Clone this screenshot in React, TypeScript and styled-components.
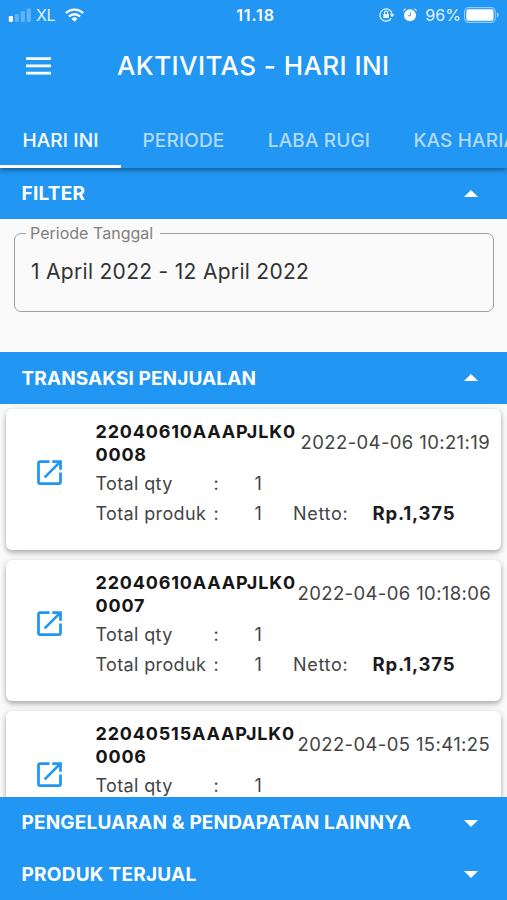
import React from "react";
import styled, { createGlobalStyle } from "styled-components";

const BLUE = "#2196f3";

const GlobalStyle = createGlobalStyle`
  *, *::before, *::after { box-sizing: border-box; }
  html, body { margin: 0; background: #fafafa; }
  body { font-family: Inter, "Liberation Sans", sans-serif; overflow: hidden; }
`;

const Screen = styled.div`
  display: flex;
  flex-direction: column;
  width: 507px;
  height: 900px;
  overflow: hidden;
  background: #fafafa;
`;

const Header = styled.header`
  flex: none;
  position: relative;
  z-index: 2;
  height: 168px;
  background: ${BLUE};
  color: #fff;
  box-shadow: 0 2px 5px rgba(0, 0, 0, 0.4);
`;

const StatusBar = styled.div`
  display: grid;
  grid-template-columns: 1fr auto 1fr;
  align-items: center;
  height: 30px;
  padding: 0 7px 0 8px;
`;

const StatusGroup = styled.div<{ $end?: boolean }>`
  display: flex;
  align-items: center;
  justify-content: ${(p) => (p.$end ? "flex-end" : "flex-start")};
  height: 30px;
`;

const StatusText = styled.span<{ $spacing?: number }>`
  font-size: 16px;
  line-height: 20px;
  letter-spacing: ${(p) => p.$spacing ?? 0}px;
  color: rgba(255, 255, 255, 0.9);
`;

const Clock = styled.span`
  font-size: 16px;
  font-weight: 600;
  line-height: 20px;
  letter-spacing: 0.9px;
  padding-left: 3px;
`;

const SignalIcon = styled.svg`
  margin-right: 5px;
`;
const WifiSvg = styled.svg`
  margin: 0 0 1px 10px;
`;
const LockSvg = styled.svg`
  margin-right: 8px;
`;
const AlarmSvg = styled.svg`
  margin-right: 8px;
`;
const BatterySvg = styled.svg`
  margin-left: 3px;
`;

const TitleBar = styled.div`
  display: flex;
  align-items: center;
  height: 72px;
  padding-left: 26px;
`;

const MenuButton = styled.button`
  display: flex;
  width: 25px;
  height: 18px;
  margin: 0 66px 0 0;
  padding: 0;
  border: 0;
  background: none;
`;

const Title = styled.h1`
  margin: 0;
  font-size: 26px;
  font-weight: 500;
  line-height: 32px;
  letter-spacing: 0.42px;
  white-space: nowrap;
`;

const Tabs = styled.nav`
  display: flex;
  height: 66px;
  overflow: hidden;
`;

const Tab = styled.a<{ $active?: boolean; $width: number }>`
  flex: none;
  display: flex;
  justify-content: center;
  width: ${(p) => p.$width}px;
  padding-top: 27px;
  border-bottom: 3px solid ${(p) => (p.$active ? "#fff" : "transparent")};
  font-size: 19px;
  font-weight: 500;
  line-height: 24px;
  letter-spacing: 0.15px;
  white-space: nowrap;
  color: ${(p) => (p.$active ? "#fff" : "rgba(255, 255, 255, 0.66)")};
`;

const SectionBar = styled.div<{ $height: number }>`
  flex: none;
  display: flex;
  align-items: center;
  justify-content: space-between;
  height: ${(p) => p.$height}px;
  padding: 0 29.5px 0 21px;
  background: ${BLUE};
  color: #fff;
`;

const SectionTitle = styled.h2<{ $spacing: number }>`
  margin: 0;
  padding: 1px 0 0 0.5px;
  font-size: 19px;
  font-weight: 700;
  line-height: 24px;
  letter-spacing: ${(p) => p.$spacing}px;
  white-space: nowrap;
`;

const FilterPanel = styled.section`
  flex: none;
  height: 133px;
  padding: 5px 13px 0 14px;
`;

const Field = styled.fieldset`
  height: 88px;
  margin: 0;
  padding: 16px 15px 0 11px;
  border: 1.5px solid #a0a0a0;
  border-radius: 7px;
`;

const FieldLabel = styled.legend`
  height: 19px;
  padding: 0 7px 0 4px;
  font-size: 16px;
  line-height: 19px;
  letter-spacing: 0.02px;
  color: #808080;
`;

const FieldValue = styled.div`
  padding-left: 5px;
  font-size: 21px;
  line-height: 26px;
  letter-spacing: 0.3px;
  color: #333;
`;

const CardList = styled.section`
  flex: 1;
  min-height: 0;
  display: flex;
  flex-direction: column;
  gap: 10px;
  padding: 5px 6px 0;
  overflow: hidden;
`;

const Card = styled.article`
  flex: none;
  display: grid;
  grid-template-columns: 89.5px 1fr;
  height: 141px;
  padding-top: 11px;
  border-radius: 6px;
  background: #fff;
  box-shadow: 0 3px 5px rgba(0, 0, 0, 0.24), 0 1px 6px rgba(0, 0, 0, 0.12);
`;

const OpenLink = styled.a`
  padding: 36px 0 0 27px;
  color: ${BLUE};
`;

const CardBody = styled.div`
  display: flex;
  flex-direction: column;
`;

const CardHead = styled.div`
  display: flex;
  align-items: center;
  justify-content: space-between;
  height: 46px;
  margin-bottom: 2px;
  padding-right: 11px;
`;

const Code = styled.div`
  width: 202px;
  font-size: 18px;
  font-weight: 700;
  line-height: 23px;
  letter-spacing: 0.82px;
  word-break: break-all;
  color: #161616;
`;

const Stamp = styled.time`
  padding-bottom: 2px;
  font-size: 18.5px;
  line-height: 23px;
  letter-spacing: 0.38px;
  white-space: nowrap;
  color: #444;
`;

const Detail = styled.div`
  display: grid;
  grid-template-columns: 118px 41px 38.5px 79.5px 1fr;
  align-items: center;
  height: 30px;
  font-size: 18px;
  letter-spacing: 0.36px;
  white-space: nowrap;
  color: #444;
`;

const Netto = styled.span`
  letter-spacing: 0.7px;
`;

const Amount = styled.strong`
  font-size: 18.5px;
  font-weight: 700;
  letter-spacing: 0.8px;
  color: #1c1c1c;
`;

const Caret = ({ down }: { down?: boolean }) => (
  <svg width="14" height="8" viewBox="0 0 14 8" fill="#fff">
    <path d={down ? "M0 1h14L7 8z" : "M0 7h14L7 0z"} />
  </svg>
);

const MenuIcon = () => (
  <svg width="25" height="18" viewBox="0 0 25 18" fill="#fff">
    <path d="M0 .3h25v2.7H0zM0 7.6h25v2.7H0zM0 14.7h25v2.7H0z" />
  </svg>
);

const OpenIcon = () => (
  <svg width="33" height="33" viewBox="0 0 24 24" fill="currentColor" display="block">
    <path d="M19 19H5V5h7V3H5c-1.11 0-2 .9-2 2v14c0 1.1.89 2 2 2h14c1.1 0 2-.9 2-2v-7h-2v7zM14 3v2h3.59l-9.83 9.83 1.41 1.41L19 6.41V10h2V3h-7z" />
  </svg>
);

const Signal = () => (
  <SignalIcon width="23" height="14" viewBox="0 0 23 14" fill="#fff">
    <rect x="0.8" y="8" width="4.2" height="6" rx="1.2" />
    <g opacity="0.28">
      <rect x="6.7" y="6" width="4.2" height="8" rx="1.2" />
      <rect x="12.7" y="3.2" width="4.2" height="10.8" rx="1.2" />
      <rect x="18.7" y="0.5" width="4.2" height="13.5" rx="1.2" />
    </g>
  </SignalIcon>
);

const Wifi = () => (
  <WifiSvg width="19" height="14" viewBox="0 0 19 14" fill="none" stroke="#fff" strokeWidth="2.4">
    <path d="M.9 5.2a12.2 12.2 0 0 1 17.2 0" />
    <path d="M4 8.5a7.8 7.8 0 0 1 11 0" />
    <path d="M9.5 13.7L6.5 10.8a4.3 4.3 0 0 1 6 0z" fill="#fff" stroke="none" />
  </WifiSvg>
);

const RotationLock = () => (
  <LockSvg width="16" height="14" viewBox="0 0 16 14" fill="none" stroke="#fff" strokeWidth="1.2" opacity="0.9">
    <path d="M12.2 10.4A6.1 6.1 0 1 1 13.1 6" />
    <path d="M10.8 6h4.6l-2.3 3.2z" fill="#fff" stroke="none" />
    <path d="M5.5 6.3V4.8a1.6 1.6 0 0 1 3.2 0v1.5" />
    <rect x="4.3" y="6" width="5.6" height="4" rx=".6" fill="#fff" stroke="none" />
  </LockSvg>
);

const Alarm = () => (
  <AlarmSvg width="14" height="14" viewBox="0 0 14 14" fill="#fff">
    <circle cx="7" cy="7.3" r="6" />
    <path d="M.2 3.6A3 3 0 0 1 3.4.4zM13.8 3.6A3 3 0 0 0 10.6.4z" />
    <path d="M7.4 4.2v3.6H4.8" fill="none" stroke={BLUE} strokeWidth="0.9" />
  </AlarmSvg>
);

const Battery = () => (
  <BatterySvg width="36" height="16" viewBox="0 0 36 16">
    <rect x="0.6" y="0.6" width="30.6" height="14.8" rx="3.8" fill="none" stroke="#fff" strokeWidth="1.1" opacity="0.5" />
    <rect x="2.3" y="2.3" width="27.2" height="11.4" rx="1.8" fill="#fff" />
    <path d="M32.8 5.3c2.6.8 2.6 4.6 0 5.4z" fill="#fff" opacity="0.5" />
  </BatterySvg>
);

const tabs = [
  { label: "HARI INI", width: 121 },
  { label: "PERIODE", width: 125 },
  { label: "LABA RUGI", width: 146 },
  { label: "KAS HARIAN", width: 161 },
];

const sales = [
  { code: "22040610AAAPJLK00008", time: "2022-04-06 10:21:19" },
  { code: "22040610AAAPJLK00007", time: "2022-04-06 10:18:06" },
  { code: "22040515AAAPJLK00006", time: "2022-04-05 15:41:25" },
];

export default function App() {
  return (
    <>
      <GlobalStyle />
      <Screen>
        <Header>
          <StatusBar>
            <StatusGroup>
              <Signal />
              <StatusText $spacing={-0.5}>XL</StatusText>
              <Wifi />
            </StatusGroup>
            <Clock>11.18</Clock>
            <StatusGroup $end>
              <RotationLock />
              <Alarm />
              <StatusText $spacing={0.1}>96%</StatusText>
              <Battery />
            </StatusGroup>
          </StatusBar>
          <TitleBar>
            <MenuButton aria-label="Menu">
              <MenuIcon />
            </MenuButton>
            <Title>AKTIVITAS - HARI INI</Title>
          </TitleBar>
          <Tabs>
            {tabs.map((t, i) => (
              <Tab key={t.label} $active={i === 0} $width={t.width}>
                {t.label}
              </Tab>
            ))}
          </Tabs>
        </Header>

        <SectionBar $height={51}>
          <SectionTitle $spacing={0.25}>FILTER</SectionTitle>
          <Caret />
        </SectionBar>
        <FilterPanel>
          <Field>
            <FieldLabel>Periode Tanggal</FieldLabel>
            <FieldValue>1 April 2022 - 12 April 2022</FieldValue>
          </Field>
        </FilterPanel>

        <SectionBar $height={52}>
          <SectionTitle $spacing={0.11}>TRANSAKSI PENJUALAN</SectionTitle>
          <Caret />
        </SectionBar>
        <CardList>
          {sales.map((s) => (
            <Card key={s.code}>
              <OpenLink>
                <OpenIcon />
              </OpenLink>
              <CardBody>
                <CardHead>
                  <Code>{s.code}</Code>
                  <Stamp>{s.time}</Stamp>
                </CardHead>
                <Detail>
                  <span>Total qty</span>
                  <span>:</span>
                  <span>1</span>
                </Detail>
                <Detail>
                  <span>Total produk</span>
                  <span>:</span>
                  <span>1</span>
                  <Netto>Netto:</Netto>
                  <Amount>Rp.1,375</Amount>
                </Detail>
              </CardBody>
            </Card>
          ))}
        </CardList>

        <SectionBar $height={51}>
          <SectionTitle $spacing={0.17}>PENGELUARAN &amp; PENDAPATAN LAINNYA</SectionTitle>
          <Caret down />
        </SectionBar>
        <SectionBar $height={52}>
          <SectionTitle $spacing={0.25}>PRODUK TERJUAL</SectionTitle>
          <Caret down />
        </SectionBar>
      </Screen>
    </>
  );
}
